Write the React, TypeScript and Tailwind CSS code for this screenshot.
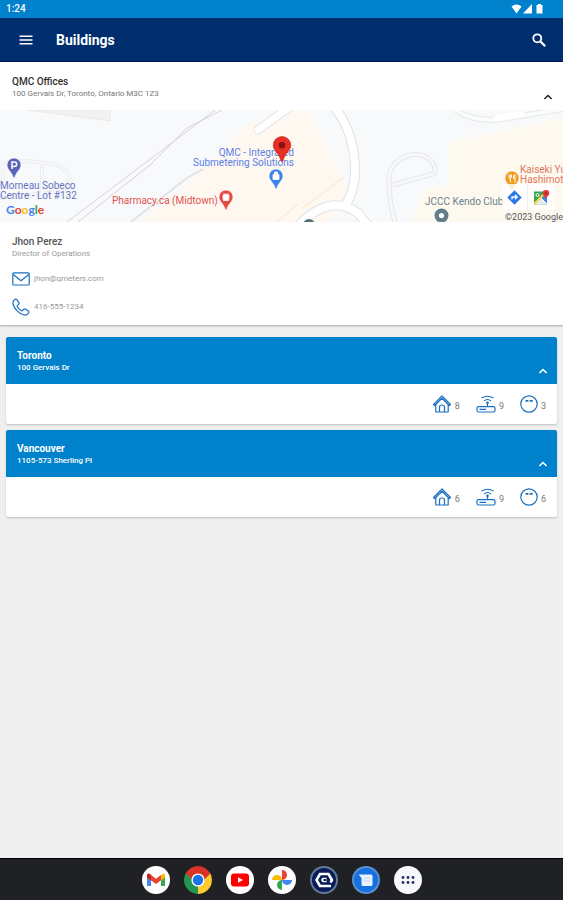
import type { ReactNode } from "react";

type Building = { city: string; address: string; homes: number; routers: number; meters: number };

const buildings: Building[] = [
  { city: "Toronto", address: "100 Gervais Dr", homes: 8, routers: 9, meters: 3 },
  { city: "Vancouver", address: "1105-573 Sherling Pl", homes: 6, routers: 9, meters: 6 },
];

function StatusBar() {
  return (
    <div className="flex h-[18px] items-center justify-between bg-[#0081cc] pr-[18px] pl-1.5 text-[10px] leading-3 font-medium text-white">
      <span>1:24</span>
      <svg width="34" height="12" viewBox="0 0 34 12" fill="#fff" aria-hidden="true">
        <path d="M0.5 3.6Q5.5 -0.6 10.5 3.6L5.5 10.4Z" />
        <path d="M21 1v9.4H12Z" />
        <path d="M27 1h3v1h1.5v8.6h-6V2H27Z" />
      </svg>
    </div>
  );
}

function Header() {
  return (
    <header className="flex h-11 items-center border-b border-[#00145a] bg-[#002d6e] px-4 text-white">
      <button type="button" aria-label="Menu" className="flex size-5 items-center justify-center">
        <svg width="14" height="10" viewBox="0 0 14 10" fill="#fff" aria-hidden="true">
          <path d="M0.5 0.5h13v1.6h-13zM0.5 4.2h13v1.6h-13zM0.5 7.9h13v1.6h-13z" />
        </svg>
      </button>
      <h1 className="ml-5 flex-1 text-[14px] leading-5 font-bold">Buildings</h1>
      <button type="button" aria-label="Search" className="flex size-4 items-center justify-center">
        <svg width="14" height="14" viewBox="0 0 14 14" fill="none" stroke="#fff" strokeWidth="1.8" aria-hidden="true">
          <circle cx="5.3" cy="5.3" r="4" />
          <path d="M8.2 8.2l5 5" strokeWidth="2.2" />
        </svg>
      </button>
    </header>
  );
}

function Chevron() {
  return (
    <svg width="10" height="6" viewBox="0 0 10 6" fill="none" stroke="currentColor" strokeWidth="1.6" aria-hidden="true">
      <path d="M1.4 5L5 1.5 8.6 5" />
    </svg>
  );
}

function MapPin({ color, className, children }: { color: string; className: string; children: ReactNode }) {
  return (
    <svg className={`absolute ${className}`} width="16" height="22" viewBox="0 0 16 22" aria-hidden="true">
      <path d="M8 1a7 7 0 0 1 7 7c0 4.600-4.400 6.200-6.200 12.200L8 21.300l-.8-1.100C5.400 14.200 1 12.600 1 8a7 7 0 0 1 7-7z" fill={color} stroke="#fff" strokeWidth=".6" />
      {children}
    </svg>
  );
}

function OfficeMap() {
  return (
    <div className="relative h-28 w-full overflow-hidden bg-[#f8f9fb] text-[10px] leading-[10px]">
      <svg className="h-full w-full" viewBox="0 0 563 112" preserveAspectRatio="xMidYMid slice" fill="none" aria-hidden="true">
        <path d="M28 0H110V11L66 5Z" fill="#f1f1f1" stroke="#e9e9e9" />
        <path d="M141 112L202 61 246 16 276 0H308L348 80 330 112Z" fill="#fef8f0" />
        <path d="M412 112L423 80 448 76 450 32 563 8V112Z" fill="#fef9ef" />
        <path d="M0 54C10 50 28 50 52 54C74 58 74 80 58 82L0 88M42 54V84M4 58L0 84" stroke="#ebedef" strokeWidth="4" />
        <path d="M0 54C10 50 28 50 52 54C74 58 74 80 58 82L0 88M42 54V84M4 58L0 84" stroke="#f7f8f9" strokeWidth="2" />
        <path d="M67 112L202 10 215 0M78 112L150 55 187 18 222 0" stroke="#d3d4d6" />
        <path d="M131 112L187 68 203 59" stroke="#e1e3e5" strokeWidth="2" />
        <path d="M258 20L294 -6" stroke="#e3e5e7" strokeWidth="9" strokeLinecap="round" />
        <path d="M258 20L294 -6" stroke="#fff" strokeWidth="7" strokeLinecap="round" />
        <path d="M335 -2C348 14 355 37 355 61C355 76 351 87 344 98M296 118C321 91 341 91 358 103L370 118" stroke="#dfe2e5" strokeWidth="10" />
        <path d="M335 -2C348 14 355 37 355 61C355 76 351 87 344 98M296 118C321 91 341 91 358 103L370 118" stroke="#fff" strokeWidth="8" />
        <path d="M303 98L344 67M276 112L298 94" stroke="#fae3c8" />
        <path d="M456 0C466 8 482 11 502 9L563 -1" stroke="#e5e7e9" strokeWidth="6" />
        <path d="M456 0C466 8 482 11 502 9L563 -1" stroke="#fafbfb" strokeWidth="4" />
        <path d="M497 8L522 4" stroke="#fff" strokeWidth="6" strokeLinecap="round" />
        <path d="M393 75L433 64C439 58 430 47 421 45C405 42 389 54 389 68C389 88 391 101 396 114" stroke="#e5e7ea" strokeWidth="5" strokeLinejoin="round" />
        <path d="M393 75L433 64C439 58 430 47 421 45C405 42 389 54 389 68C389 88 391 101 396 114" stroke="#f7f8fa" strokeWidth="3" strokeLinejoin="round" />
        <circle cx="309" cy="115" r="6" fill="#52717c" />
      </svg>
      <MapPin color="#5a64bb" className="top-[47px] left-1.5">
        <path d="M6 12V5h2.500a2.200 2.200 0 0 1 0 4.400H6" fill="none" stroke="#fff" strokeWidth="1.500" />
      </MapPin>
      <p className="absolute top-[71px] left-0 whitespace-nowrap text-[#6673c4]">Morneau Sobeco<br />Centre - Lot #132</p>
      <p className="absolute top-[94px] left-1.5 font-[Lato] text-[12px] leading-3 font-bold" aria-label="Google">
        <span className="text-[#4285f4]">G</span><span className="text-[#ea4335]">o</span><span className="text-[#fbbc05]">o</span><span className="text-[#4285f4]">g</span><span className="text-[#34a853]">l</span><span className="text-[#ea4335]">e</span>
      </p>
      <p className="absolute top-[38px] left-[193px] text-right whitespace-nowrap text-[#5a81e8]">QMC - Integrated<br />Submetering Solutions</p>
      <p className="absolute top-[86px] left-28 whitespace-nowrap text-[#df5350]">Pharmacy.ca (Midtown)</p>
      <MapPin color="#e34b43" className="top-[79px] left-[218px]">
        <path d="M4.800 6.500L8 5l3.200 1.500-.6 5H5.400zM6 6V4M10 6V4" fill="#fff" stroke="#fff" strokeWidth=".8" />
      </MapPin>
      <MapPin color="#3f83ed" className="top-[58px] left-[268px]">
        <path d="M5 11.500V6.500h6v5zM6.500 6V4h3v2" fill="#fff" stroke="#fff" strokeWidth=".8" />
      </MapPin>
      <svg className="absolute top-[26px] left-[272px]" width="20" height="26" viewBox="0 0 20 26" aria-hidden="true">
        <path d="M10 .5a8.800 8.800 0 0 1 8.800 8.800c0 5.600-5.500 7-7.800 15.500q-1 1.500-2 0C6.700 16.300 1.200 14.900 1.200 9.300A8.800 8.800 0 0 1 10 .5z" fill="#e62e25" stroke="#c5221f" strokeWidth=".6" />
        <circle cx="10" cy="9.300" r="3.200" fill="#811411" />
      </svg>
      <p className="absolute top-[87px] left-[425px] whitespace-nowrap text-[#70808b]">JCCC Kendo Club</p>
      <svg className="absolute top-[98px] left-[434px]" width="15" height="15" viewBox="0 0 15 15" aria-hidden="true">
        <circle cx="7.500" cy="7.500" r="7" fill="#617d87" /><circle cx="7.500" cy="7.500" r="2.600" fill="#fff" />
      </svg>
      <p className="absolute top-[55px] left-[520px] whitespace-nowrap text-[#dc775f]">Kaiseki Yu<br />Hashimoto</p>
      <MapPin color="#f09b20" className="top-[60px] left-[504px]">
        <path d="M5 4.500v3q0 1 1.300 1v4M6.300 4.500v4M7.500 4.500v3M11 12.500v-8q-2 1-1.500 4H11" stroke="#fff" fill="none" />
      </MapPin>
      <div className="absolute top-[74px] right-2 flex h-[26px] rounded-sm bg-white/80">
        <button type="button" aria-label="Directions" className="flex w-[26px] items-center justify-center border-r border-[#eeeeee]">
          <svg width="15" height="15" viewBox="0 0 15 15" aria-hidden="true">
            <path d="M7.500.3L14.700 7.500 7.500 14.700.3 7.500Z" fill="#2979e8" />
            <path d="M5 9.500V7h4M8 4.800L10.300 7 8 9.200" fill="none" stroke="#fff" strokeWidth="1.300" />
          </svg>
        </button>
        <button type="button" aria-label="Open in maps" className="flex w-[27px] items-center justify-center">
          <svg width="17" height="15" viewBox="0 0 17 15" aria-hidden="true">
            <path d="M1 1.500h13v13H1Z" fill="#34a853" />
            <path d="M1 14.500L8 7.500l6 7Z" fill="#e7ebef" /><path d="M8 7.500L14 1.500v13Z" fill="#4285f4" />
            <path d="M1 14L13 2" stroke="#fdd33b" strokeWidth="2" /><path d="M8 8l6 6" stroke="#fff" />
            <circle cx="4.500" cy="5" r="1.500" fill="none" stroke="#fff" />
            <path d="M13 0a3.300 3.300 0 0 1 3.300 3.300C16.300 6 13 6.500 13 10.500 13 6.500 9.700 6 9.700 3.300A3.300 3.300 0 0 1 13 0Z" fill="#e53935" />
            <circle cx="13" cy="3.300" r="1" fill="#8b1b17" />
          </svg>
        </button>
      </div>
      <p className="absolute right-0 bottom-0 text-[9px] leading-[10px] text-[#55585c]">©2023 Google</p>
    </div>
  );
}

function OfficePanel() {
  return (
    <section className="bg-white pb-2 shadow-[0_1px_2px_rgba(0,0,0,0.3)]">
      <div className="flex h-12 items-end justify-between px-3 pb-2.5">
        <div>
          <h2 className="text-[10px] leading-3 font-medium text-[#303030]">QMC Offices</h2>
          <p className="text-[8px] leading-3 text-[#777777]">100 Gervais Dr, Toronto, Ontario M3C 1Z3</p>
        </div>
        <button type="button" aria-label="Collapse QMC Offices" className="-mr-0.5 text-[#222222]"><Chevron /></button>
      </div>
      <OfficeMap />
      <div className="px-3 pt-3.5">
        <h3 className="text-[10px] leading-3 font-medium text-[#555555]">Jhon Perez</h3>
        <p className="text-[8px] leading-3 text-[#999999]">Director of Operations</p>
        <a href="mailto:jhon@qmeters.com" className="mt-[9px] flex h-5 items-center gap-1 text-[8px] text-[#999999]">
          <svg width="18" height="14" viewBox="0 0 18 14" fill="none" stroke="#1a6fc0" strokeWidth="1.200" aria-hidden="true">
            <rect x=".8" y=".8" width="16.400" height="12.200" rx="1" /><path d="M1.200 2.500L9 8.700l7.800-6.200" />
          </svg>
          jhon@qmeters.com
        </a>
        <a href="tel:416-555-1234" className="mt-2 flex h-5 items-center gap-1 text-[8px] text-[#999999]">
          <svg width="18" height="18" viewBox="0 0 18 18" fill="none" stroke="#1a6fc0" strokeWidth="1.200" aria-hidden="true">
            <path d="M3.200 1.200Q.3 3 1 6C2.300 11 7 15.800 12 17q3 .7 4.800-2.200.5-1-.4-1.700l-3-2q-1-.6-1.800.2l-1 1.200q-.7.600-1.500.1-2.300-1.500-3.700-3.700-.5-.8.1-1.500l1.200-1q.8-.8.2-1.800l-2-3q-.7-.9-1.700-.4Z" />
          </svg>
          416-555-1234
        </a>
      </div>
    </section>
  );
}

function HomeIcon() {
  return (
    <svg width="20" height="18" viewBox="0 0 20 18" fill="none" stroke="#1a6fc0" strokeWidth="1.200" strokeLinejoin="round" aria-hidden="true">
      <path d="M1.500 9.500L10 1l8.500 8.500-1.200 1L10 3.300 2.700 10.500ZM3.800 9.500V17h12.400V9.500M7.500 17v-5q0-2 2.500-2t2.500 2v5" />
    </svg>
  );
}

function RouterIcon() {
  return (
    <svg width="20" height="18" viewBox="0 0 20 18" fill="none" stroke="#1a6fc0" strokeWidth="1.200" aria-hidden="true">
      <path d="M5.500 3Q11.500-.5 17.500 3M8 6Q11.500 3 15 6" />
      <circle cx="11.500" cy="7.800" r=".7" fill="#1a6fc0" />
      <path d="M11.500 8v4" /><rect x="1" y="11.700" width="18" height="5.300" rx="1.500" /><path d="M3.500 14.400H10" />
    </svg>
  );
}

function MeterIcon() {
  return (
    <svg width="18" height="18" viewBox="0 0 18 18" fill="none" stroke="#1a6fc0" strokeWidth="1.200" aria-hidden="true">
      <circle cx="9" cy="9" r="8.200" /><path d="M5.500 5.800h3M9.700 5.800h3" strokeWidth="1.800" />
    </svg>
  );
}

function BuildingCard({ city, address, homes, routers, meters }: Building) {
  return (
    <article className="overflow-hidden rounded-xs bg-white shadow-[0_1px_2px_rgba(0,0,0,0.2)]">
      <div className="flex h-[47px] items-end justify-between bg-[#0081cc] px-[11px] pb-2.5 text-white">
        <div>
          <h2 className="text-[10px] leading-3 font-bold">{city}</h2>
          <p className="text-[8px] leading-3 font-medium">{address}</p>
        </div>
        <button type="button" aria-label={`Collapse ${city}`} className="-mr-0.5"><Chevron /></button>
      </div>
      <ul className="flex h-10 items-center justify-end gap-4 pr-[11px] text-[9px] leading-3 text-[#777777]">
        <li className="flex items-center gap-[3px]"><HomeIcon /><span className="pt-1">{homes}</span></li>
        <li className="flex items-center gap-[3px]"><RouterIcon /><span className="pt-1">{routers}</span></li>
        <li className="flex items-center gap-[3px]"><MeterIcon /><span className="pt-1">{meters}</span></li>
      </ul>
    </article>
  );
}

const apps: { name: string; icon: ReactNode }[] = [
  {
    name: "Gmail",
    icon: (
      <>
        <circle cx="14" cy="14" r="14" fill="#fff" />
        <path d="M5 8.500v11.500h4V11Z" fill="#4285f4" /><path d="M23 8.500v11.500h-4V11Z" fill="#34a853" />
        <path d="M19 9.500l2-2q2 0 2 2v2l-4 3Z" fill="#fbbc04" />
        <path d="M5 11.500v-2q0-2.300 2.500-1.700L14 12.700l5-3.800v5.300l-5 3.800Z" fill="#ea4335" />
        <path d="M5 11.500v-2q0-2 2-2l2 1.500v5.200Z" fill="#c5221f" />
      </>
    ),
  },
  {
    name: "Chrome",
    icon: (
      <>
        <path d="M14 14L1.900 7A14 14 0 0 1 26.100 7Z" fill="#db3328" />
        <path d="M14 14L26.100 7A14 14 0 0 1 14 28Z" fill="#fdcd30" />
        <path d="M14 14V28A14 14 0 0 1 1.900 7Z" fill="#229653" />
        <path d="M14 7.500H26.400L20 14ZM8.400 17.300L1.900 7 10 8Z" fill="#db3328" />
        <path d="M2.100 7L8.400 17.300 13 19Z" fill="#229653" />
        <path d="M19.600 17.300L14 28l3-9Z" fill="#fdcd30" />
        <circle cx="14" cy="14" r="6.600" fill="#fff" /><circle cx="14" cy="14" r="5.200" fill="#1a73e8" />
      </>
    ),
  },
  {
    name: "YouTube",
    icon: (
      <>
        <circle cx="14" cy="14" r="14" fill="#fff" />
        <rect x="5" y="7.500" width="18" height="13" rx="3" fill="#f00" /><path d="M12 11.200v5.600l5-2.800Z" fill="#fff" />
      </>
    ),
  },
  {
    name: "Photos",
    icon: (
      <>
        <circle cx="14" cy="14" r="14" fill="#fff" />
        <path d="M14 4a5 5 0 0 1 0 10Z" fill="#ea4335" /><path d="M24 14a5 5 0 0 1-10 0Z" fill="#4285f4" />
        <path d="M14 24a5 5 0 0 1 0-10Z" fill="#34a853" /><path d="M4 14a5 5 0 0 1 10 0Z" fill="#fbbc04" />
      </>
    ),
  },
  {
    name: "QMC",
    icon: (
      <>
        <circle cx="14" cy="14" r="14" fill="#627c99" /><circle cx="14" cy="14" r="12" fill="#071c59" />
        <path d="M20.500 16.500L22 14l-3.500-6h-8.500L6.500 14l3.500 6h11" fill="none" stroke="#fff" strokeWidth="2.600" />
        <path d="M12.500 11.700h4v4.600h-4L11 14Z" fill="#fff" /><path d="M13.500 13h2.500v2h-2.500Z" fill="#071c59" />
      </>
    ),
  },
  {
    name: "Messages",
    icon: (
      <>
        <circle cx="14" cy="14" r="14" fill="#5991cf" /><circle cx="14" cy="14" r="12" fill="#176fe0" />
        <path d="M6.500 8.500H19q1.500 0 1.500 1.500v8.500q0 1.500-1.500 1.500h-8q-1.500 0-1.500-1.500V12Z" fill="#e8f1fe" />
        <path d="M12 12h6M12 15h6" stroke="#c4dcfa" />
      </>
    ),
  },
  {
    name: "All apps",
    icon: (
      <>
        <circle cx="14" cy="14" r="14" fill="#f8f8ff" />
        {[9, 14, 19].map((x) => [11.5, 16.5].map((y) => <circle key={`${x}-${y}`} cx={x} cy={y} r="1.400" fill="#2c2c5c" />))}
      </>
    ),
  },
];

function Dock() {
  return (
    <nav aria-label="Apps" className="flex h-[42px] items-center justify-center gap-3.5 border-t border-black bg-[#202124]">
      {apps.map((app) => (
        <button key={app.name} type="button" aria-label={app.name} className="size-7">
          <svg width="28" height="28" viewBox="0 0 28 28" aria-hidden="true">{app.icon}</svg>
        </button>
      ))}
    </nav>
  );
}

export default function App() {
  return (
    <div className="flex min-h-screen flex-col bg-[#efefef] font-[Roboto,sans-serif]">
      <StatusBar />
      <Header />
      <main className="flex-1">
        <OfficePanel />
        <div className="flex flex-col gap-1.5 px-1.5 pt-3">
          {buildings.map((building) => <BuildingCard key={building.city} {...building} />)}
        </div>
      </main>
      <Dock />
    </div>
  );
}
